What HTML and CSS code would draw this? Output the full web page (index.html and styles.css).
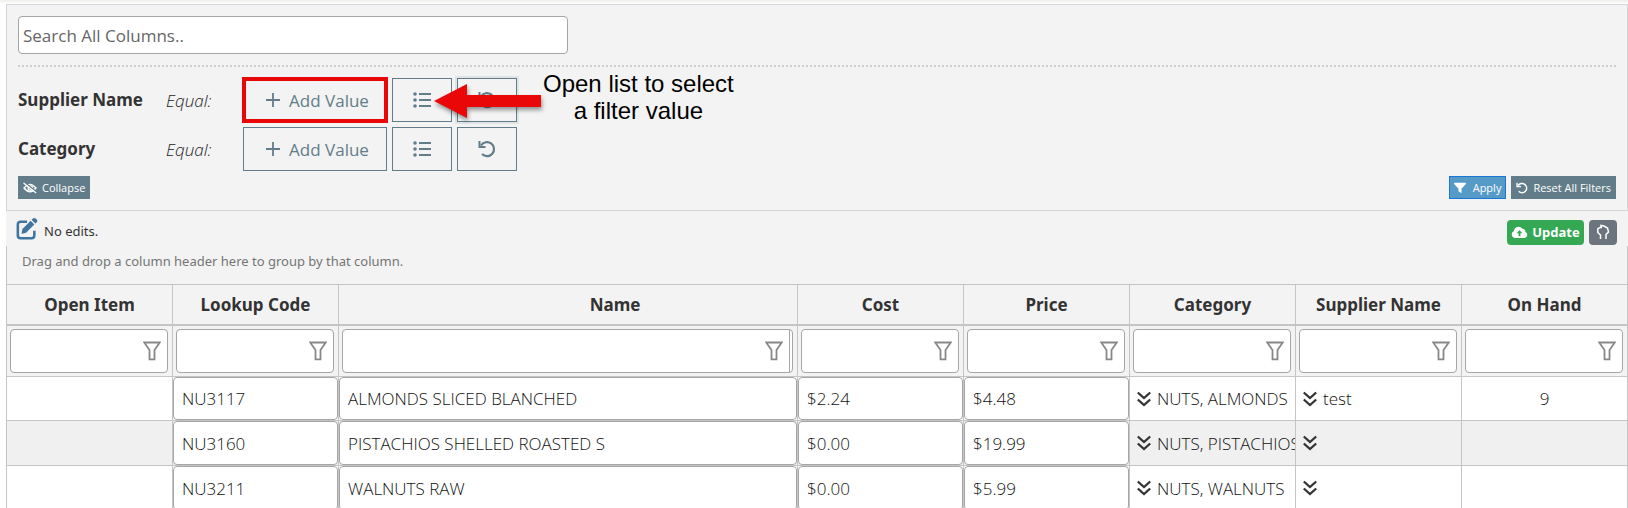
FILE: index.html
```html
<!DOCTYPE html>
<html lang="en">
<head>
<meta charset="utf-8">
<title>Item grid</title>
<link rel="stylesheet" href="styles.css">
</head>
<body>
<svg class="defs" aria-hidden="true">
  <symbol id="plus" viewBox="0 0 16 16"><path d="M8 1v14M1 8h14" stroke="currentColor" stroke-width="1.8" fill="none"/></symbol>
  <symbol id="list" viewBox="0 0 18 16"><path d="M6 2h12M6 8h12M6 14h12" stroke="currentColor" stroke-width="2.200" fill="none"/><circle cx="2" cy="2" r="1.8" fill="currentColor"/><circle cx="2" cy="8" r="1.8" fill="currentColor"/><circle cx="2" cy="14" r="1.8" fill="currentColor"/></symbol>
  <symbol id="undo" viewBox="0 0 18 18"><path d="M3 5.500A7 7 0 1 1 4 14" stroke="currentColor" stroke-width="2.200" fill="none"/><path d="M.5 1v7h7V6L2.500 6V1z" fill="currentColor"/></symbol>
  <symbol id="eye" viewBox="0 0 20 16"><path d="M1.500 8Q10-2.500 18.500 8Q10 18.500 1.500 8z" stroke="currentColor" stroke-width="2" fill="none"/><circle cx="10.500" cy="8" r="3.200" stroke="currentColor" stroke-width="1.800" fill="none"/><path d="M2.500 0l17 14" stroke="#627d89" stroke-width="2"/><path d="M.8 1l18 14" stroke="currentColor" stroke-width="1.900"/></symbol>
  <symbol id="solid-filter" viewBox="0 0 16 14"><path d="M1 0h14q1.500.4.7 1.700L10 8v6l-4-2.600V8L.3 1.700Q-.4.400 1 0z" fill="currentColor"/></symbol>
  <symbol id="filter" viewBox="0 0 18 20"><path d="M1.200 1.500h15.600L11.500 9v9.300h-5V9z" stroke="currentColor" stroke-width="1.800" fill="none"/></symbol>
  <symbol id="down" viewBox="0 0 14 16"><path d="M.8 1.500L7 7l6.200-5.500M.8 8.500L7 14l6.200-5.500" stroke="currentColor" stroke-width="2.300" fill="none"/></symbol>
  <symbol id="edit" viewBox="0 0 24 24"><path d="M12 4H5Q2 4 2 7v12q0 3 3 3h12q3 0 3-3v-5" stroke="currentColor" stroke-width="2.800" fill="none"/><path d="M7 12l9-9 4 4-9 9-5 1.300zM17 2l1.500-1.500q1.500-1 3 0l1.200 1.200q1.200 1.500 0 3L21 6z" fill="currentColor"/></symbol>
  <symbol id="cloud" viewBox="0 0 18 14"><path d="M4 13a4 4 0 0 1-1-7.600A5 5 0 0 1 12 3a3 3 0 0 1 3.300 3.500A3.400 3.400 0 0 1 14.500 13z" fill="#fff"/><path d="M9 4.500l3.200 3.200H10V11H8V7.700H5.800z" fill="#34a853"/></symbol>
  <symbol id="loop" viewBox="0 0 14 16"><path d="M4.500 15v-4L1.800 8.500V5L4 3.500h2M5 3.500V1.500L8 2l3.500 2L12.500 8 10 10.500V15" stroke="currentColor" stroke-width="1.500" fill="none"/></symbol>
</svg>

<main class="page">
  <section class="filters" aria-label="Filters">
    <input class="search" type="text" placeholder="Search All Columns.." aria-label="Search all columns">
    <div class="criteria">
      <div class="criterion">
        <strong class="field">Supplier Name</strong>
        <em class="operator">Equal:</em>
        <div class="actions">
          <button class="outline add highlighted" type="button"><svg class="icon16"><use href="#plus"/></svg>Add Value</button>
          <button class="outline square" type="button" aria-label="Open list"><svg class="icon-list"><use href="#list"/></svg></button>
          <button class="outline square focused" type="button" aria-label="Reset"><svg class="icon18"><use href="#undo"/></svg></button>
          <div class="callout">
            <svg class="arrow" viewBox="0 0 107 34"><path d="M0 17L33 0v11h74v12H33v11z" fill="#ea0707"/></svg>
            <p class="note">Open list to select<br>a filter value</p>
          </div>
        </div>
      </div>
      <div class="criterion">
        <strong class="field">Category</strong>
        <em class="operator">Equal:</em>
        <div class="actions">
          <button class="outline add" type="button"><svg class="icon16"><use href="#plus"/></svg>Add Value</button>
          <button class="outline square" type="button" aria-label="Open list"><svg class="icon-list"><use href="#list"/></svg></button>
          <button class="outline square" type="button" aria-label="Reset"><svg class="icon18"><use href="#undo"/></svg></button>
        </div>
      </div>
    </div>
    <div class="footer">
      <button class="small" type="button"><svg class="icon-eye"><use href="#eye"/></svg>Collapse</button>
      <div class="footer-right">
        <button class="small apply" type="button"><svg class="icon12"><use href="#solid-filter"/></svg>Apply</button>
        <button class="small" type="button"><svg class="icon12"><use href="#undo"/></svg>Reset All Filters</button>
      </div>
    </div>
  </section>

  <div class="toolbar">
    <div class="status"><svg class="icon-edit"><use href="#edit"/></svg><span>No edits.</span></div>
    <div class="tools">
      <button class="update" type="button"><svg class="icon-cloud"><use href="#cloud"/></svg>Update</button>
      <button class="loop" type="button" aria-label="Refresh layout"><svg class="icon-loop"><use href="#loop"/></svg></button>
    </div>
  </div>

  <section class="grid">
    <p class="group-hint">Drag and drop a column header here to group by that column.</p>
    <table>
      <colgroup><col class="first"><col class="c"><col><col class="c"><col class="c"><col class="c"><col class="c"><col class="c"></colgroup>
      <thead>
        <tr><th>Open Item</th><th>Lookup Code</th><th class="name-head">Name</th><th>Cost</th><th>Price</th><th>Category</th><th>Supplier Name</th><th>On Hand</th></tr>
        <tr class="filter-row">
          <td><div class="filter"><input type="text" aria-label="Filter open item"><svg><use href="#filter"/></svg></div></td>
          <td><div class="filter"><input type="text" aria-label="Filter lookup code"><svg><use href="#filter"/></svg></div></td>
          <td><div class="filter double"><input type="text" aria-label="Filter name"><svg><use href="#filter"/></svg></div></td>
          <td><div class="filter"><input type="text" aria-label="Filter cost"><svg><use href="#filter"/></svg></div></td>
          <td><div class="filter"><input type="text" aria-label="Filter price"><svg><use href="#filter"/></svg></div></td>
          <td><div class="filter"><input type="text" aria-label="Filter category"><svg><use href="#filter"/></svg></div></td>
          <td><div class="filter"><input type="text" aria-label="Filter supplier name"><svg><use href="#filter"/></svg></div></td>
          <td><div class="filter"><input type="text" aria-label="Filter on hand"><svg><use href="#filter"/></svg></div></td>
        </tr>
      </thead>
      <tbody>
        <tr>
          <td></td>
          <td><input class="edit" type="text" value="NU3117" aria-label="Lookup code"></td>
          <td><input class="edit" type="text" value="ALMONDS SLICED BLANCHED" aria-label="Name"></td>
          <td><input class="edit" type="text" value="$2.24" aria-label="Cost"></td>
          <td><input class="edit" type="text" value="$4.48" aria-label="Price"></td>
          <td><div class="pick"><svg><use href="#down"/></svg>NUTS, ALMONDS</div></td>
          <td><div class="pick"><svg><use href="#down"/></svg>test</div></td>
          <td class="number">9</td>
        </tr>
        <tr>
          <td></td>
          <td><input class="edit" type="text" value="NU3160" aria-label="Lookup code"></td>
          <td><input class="edit" type="text" value="PISTACHIOS SHELLED ROASTED S" aria-label="Name"></td>
          <td><input class="edit" type="text" value="$0.00" aria-label="Cost"></td>
          <td><input class="edit" type="text" value="$19.99" aria-label="Price"></td>
          <td><div class="pick"><svg><use href="#down"/></svg>NUTS, PISTACHIOS</div></td>
          <td><div class="pick"><svg><use href="#down"/></svg></div></td>
          <td></td>
        </tr>
        <tr>
          <td></td>
          <td><input class="edit" type="text" value="NU3211" aria-label="Lookup code"></td>
          <td><input class="edit" type="text" value="WALNUTS RAW" aria-label="Name"></td>
          <td><input class="edit" type="text" value="$0.00" aria-label="Cost"></td>
          <td><input class="edit" type="text" value="$5.99" aria-label="Price"></td>
          <td><div class="pick"><svg><use href="#down"/></svg>NUTS, WALNUTS</div></td>
          <td><div class="pick"><svg><use href="#down"/></svg></div></td>
          <td></td>
        </tr>
      </tbody>
    </table>
  </section>
</main>
</body>
</html>
```

FILE: styles.css
```css
* { box-sizing: border-box; }

html { overflow: hidden; }

body {
  margin: 0;
  background: #fff;
  color: #333;
  font-family: "Noto Sans", "Open Sans", sans-serif;
  font-size: 16px;
}

button, input { font: inherit; color: inherit; margin: 0; }
button { display: flex; align-items: center; justify-content: center; padding: 0; }
svg { display: block; flex: none; }
.defs { position: absolute; width: 0; height: 0; }

.page {
  padding: 4px 0 0 6px;
  background: linear-gradient(#eeeeea, #fff 4px);
}

.filters {
  display: flex;
  flex-direction: column;
  padding: 11px;
  background: #f3f3f3;
  border: 1px solid #d3d5d8;
}

.search {
  width: 550px;
  height: 38px;
  padding: 0 4px;
  background: #fff;
  border: 1px solid #a6a6a6;
  border-radius: 4px;
  font-family: "Open Sans", sans-serif;
  font-size: 17px;
}
.search::placeholder { color: #666; opacity: 1; }

.criteria {
  display: flex;
  flex-direction: column;
  gap: 5px;
  margin-top: 11px;
  padding-top: 11px;
  border-top: 2px dotted #d0d0d0;
}
.criterion { display: flex; align-items: center; }
.field { width: 148px; font-size: 17px; line-height: 24px; }
.operator { width: 77px; font-family: "Open Sans", sans-serif; font-size: 17px; font-weight: 300; color: #222; }
.actions { position: relative; display: flex; gap: 5px; }

.outline {
  height: 44px;
  color: #627d89;
  background: transparent;
  border: 1px solid #627d89;
  font-family: "Open Sans", sans-serif;
  font-size: 17px;
}
.add { width: 144px; gap: 8px; padding-left: 4px; }
.square { width: 60px; }
.highlighted { outline: 4px solid #ea0707; outline-offset: -3px; }
.focused { box-shadow: 0 0 0 2px #dfe4e7; }
.icon16 { width: 16px; height: 16px; }
.icon-list { width: 18px; height: 16px; }
.icon18 { width: 18px; height: 18px; }
.icon12 { width: 12px; height: 12px; }

.callout {
  position: absolute;
  left: 191px;
  top: -8px;
  display: flex;
  align-items: center;
  gap: 2px;
}
.arrow {
  width: 107px;
  height: 34px;
  margin-top: 8px;
  overflow: visible;
  filter: drop-shadow(1px 3px 2px rgba(0, 0, 0, 0.4));
}
.note {
  margin: 0;
  color: #000;
  font: 24px/27px "Liberation Sans", Arial, sans-serif;
  text-align: center;
  white-space: nowrap;
}

.footer { display: flex; justify-content: space-between; margin-top: 5px; }
.footer-right { display: flex; gap: 5px; }
.small {
  height: 23px;
  padding: 0 4px;
  gap: 5px;
  color: #fff;
  background: #627d89;
  border: 1px solid #627d89;
  font-family: "Open Sans", sans-serif;
  font-size: 11px;
}
.apply { gap: 7px; background: #569bc8; border-color: #1976d2; }
.icon-eye { width: 14px; height: 12px; }

.toolbar {
  display: flex;
  align-items: center;
  justify-content: space-between;
  height: 35px;
  padding: 0 11px 0 10px;
  background: #f3f3f3;
}
.status { display: flex; align-items: center; gap: 6px; font-size: 13px; }
.status span { padding-top: 4px; }
.icon-edit { width: 22px; height: 22px; color: #40759f; }
.tools { display: flex; gap: 5px; padding-top: 7px; }
.update {
  width: 77px;
  height: 25px;
  gap: 4px;
  color: #fff;
  background: #34a853;
  border: 0;
  border-radius: 4px;
  font-size: 13px;
  font-weight: 700;
}
.icon-cloud { width: 17px; height: 13px; }
.loop {
  width: 28px;
  height: 25px;
  color: #fff;
  background: #6c757d;
  border: 0;
  border-radius: 4px;
}
.icon-loop { width: 14px; height: 16px; }

.grid {
  background: #f3f3f3;
  border: solid #c5c5c5;
  border-width: 0 1px;
}
.group-hint {
  margin: 0;
  padding: 5px 15px 13px;
  color: #757575;
  font-size: 13px;
  line-height: 20px;
}

table {
  width: 100%;
  table-layout: fixed;
  border-collapse: separate;
  border-spacing: 0;
  border-top: 1px solid #c5c5c5;
}
.first { width: 165px; }
.c { width: 166px; }
th, td { padding: 0; border-bottom: 1px solid #c5c5c5; }
th + th, td + td { border-left: 1px solid #c5c5c5; }
th { height: 41px; border-bottom-width: 2px; font-size: 17px; font-weight: 700; }
.name-head { padding-left: 94px; }

.filter-row td { padding: 3px 4px 3px 3px; }
.filter {
  display: flex;
  align-items: center;
  height: 44px;
  padding-right: 6px;
  background: #fff;
  border: 1px solid #a6a6a6;
  border-radius: 4px;
}
.filter input { flex: 1; min-width: 0; border: 0; background: none; }
.filter svg { width: 18px; height: 20px; color: #888; }
.double { padding-right: 9px; background: linear-gradient(#a6a6a6, #a6a6a6) right 2px top / 1px 100% no-repeat #fff; }

tbody td { height: 45px; background: #fff; font-family: "Open Sans", sans-serif; font-size: 17px; font-weight: 300; color: #111; }
tbody tr:first-child td { height: 44px; }
tbody tr:nth-child(even) td { background: #f0f0f0; }
.edit {
  display: block;
  width: 100%;
  height: 44px;
  padding: 0 8px;
  background: #fff;
  border: 1px solid #a6a6a6;
  border-radius: 4px;
}
tr:first-child .edit { height: 43px; }
.pick {
  display: flex;
  align-items: center;
  gap: 6px;
  padding-left: 7px;
  overflow: hidden;
  white-space: nowrap;
}
.pick svg { width: 14px; height: 16px; color: #333; }
.number { text-align: center; }
```
